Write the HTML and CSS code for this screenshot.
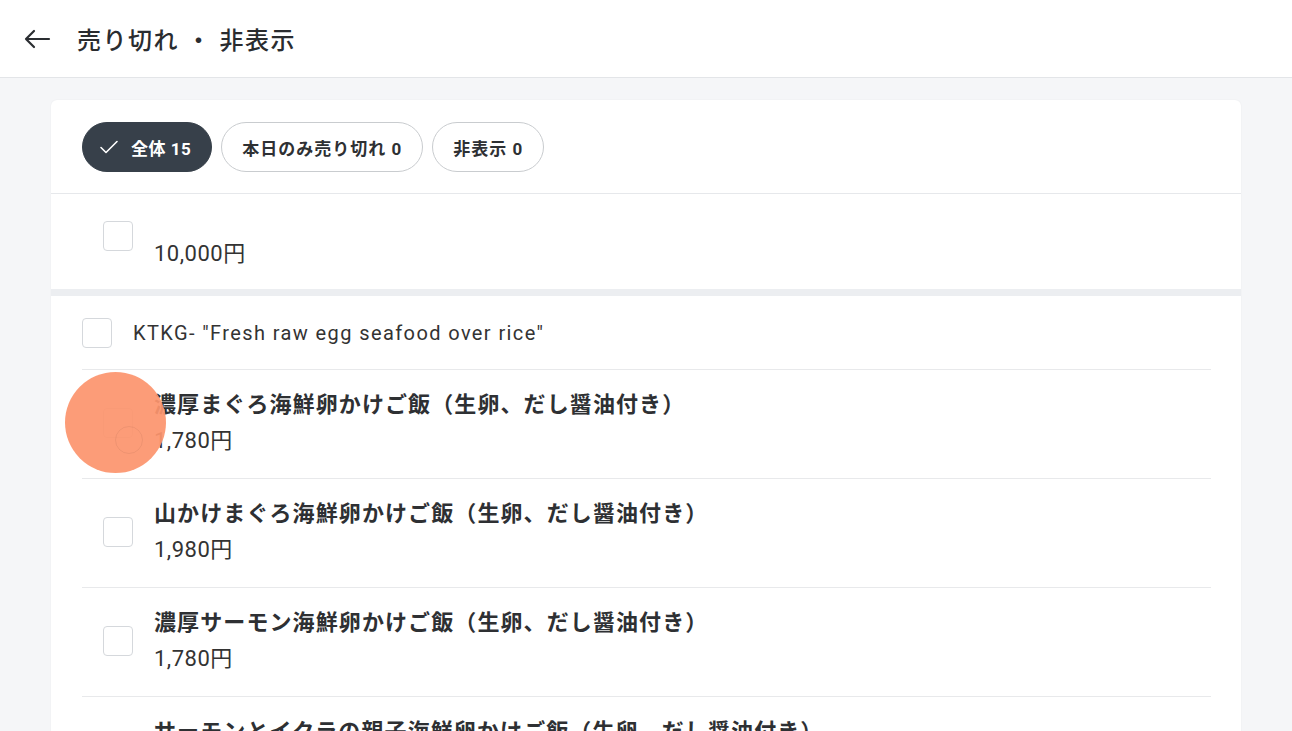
FILE: index.html
```html
<!DOCTYPE html>
<html lang="ja">
<head>
    <meta charset="UTF-8">
    <meta name="viewport" content="width=device-width, initial-scale=1.0">
    <title>売り切れ・非表示</title>
    <link rel="stylesheet" href="styles.css">
</head>
<body>

<header class="topbar">
    <svg class="back" width="28" height="20" viewBox="0 0 28 20">
        <path d="M26 10H3 M11 2L3 10L11 18" fill="none" stroke="#2a2d31" stroke-width="2.2" stroke-linecap="round" stroke-linejoin="round"/>
    </svg>
    <h1 class="title">売り切れ ・ 非表示</h1>
</header>

<main class="page">
    <div class="card">
        <div class="chips">
            <span class="chip chip-active">
                <svg width="20" height="16" viewBox="0 0 20 16">
                    <path d="M2 8.5L7 13.5L18 2.5" fill="none" stroke="#fff" stroke-width="1.6" stroke-linecap="round" stroke-linejoin="round"/>
                </svg>
                全体 15
            </span>
            <span class="chip">本日のみ売り切れ 0</span>
            <span class="chip">非表示 0</span>
        </div>

        <!-- 単品 -->
        <div class="single">
            <span class="checkbox"></span>
            <div class="single-price">10,000円</div>
        </div>

        <div class="band"></div>

        <div class="group">
            <div class="category">
                <span class="checkbox"></span>
                <span class="category-name">KTKG- "Fresh raw egg seafood over rice"</span>
            </div>

            <div class="item">
                <span class="checkbox checkbox-inset"></span>
                <div class="item-info">
                    <div class="item-name">濃厚まぐろ海鮮卵かけご飯（生卵、だし醤油付き）</div>
                    <div class="item-price">1,780円</div>
                </div>
            </div>
            <div class="item">
                <span class="checkbox checkbox-inset"></span>
                <div class="item-info">
                    <div class="item-name">山かけまぐろ海鮮卵かけご飯（生卵、だし醤油付き）</div>
                    <div class="item-price">1,980円</div>
                </div>
            </div>
            <div class="item">
                <span class="checkbox checkbox-inset"></span>
                <div class="item-info">
                    <div class="item-name">濃厚サーモン海鮮卵かけご飯（生卵、だし醤油付き）</div>
                    <div class="item-price">1,780円</div>
                </div>
            </div>
            <div class="item">
                <span class="checkbox checkbox-inset"></span>
                <div class="item-info">
                    <div class="item-name">サーモンとイクラの親子海鮮卵かけご飯（生卵、だし醤油付き）</div>
                    <div class="item-price">2,180円</div>
                </div>
            </div>
        </div>
    </div>
</main>

<!-- タップ位置の表示 -->
<div class="touch"><span class="touch-ring"></span></div>

</body>
</html>
```

FILE: styles.css
```css
html, body {
    margin: 0;
    overflow: hidden;
}
body {
    font-family: Roboto, "Noto Sans CJK JP", sans-serif;
    background-color: #f5f6f8;
    color: #2e3033;
}
.topbar {
    height: 77px;
    background-color: #fff;
    border-bottom: 1px solid #e3e5e8;
    display: flex;
    align-items: center;
    padding-left: 23px;
}
.back {
    margin-right: 26px;
}
.title {
    margin: 0;
    font-size: 24px;
    font-weight: 500;
    color: #2a2c2f;
    letter-spacing: 1.5px;
}
.page {
    padding: 22px 51px 0;
}
.card {
    background-color: #fff;
    border-radius: 6px;
    box-shadow: 0 0 2px rgba(0, 0, 0, 0.06);
}
.chips {
    display: flex;
    gap: 9px;
    padding: 22px 31px 21px;
    border-bottom: 1px solid #e6e8eb;
}
.chip {
    height: 50px;
    box-sizing: border-box;
    display: flex;
    align-items: center;
    padding: 0 20px;
    border: 1px solid #c9cccf;
    border-radius: 25px;
    font-size: 17px;
    font-weight: 700;
    letter-spacing: 1px;
    color: #2e3033;
}
.chip-active {
    background-color: #37404a;
    border-color: #37404a;
    color: #fff;
    padding: 0 20px 0 16px;
    gap: 12px;
    letter-spacing: 0.5px;
}
.checkbox {
    width: 30px;
    height: 30px;
    box-sizing: border-box;
    border: 1px solid #d5d8dc;
    border-radius: 4px;
    flex-shrink: 0;
}
.single {
    display: flex;
    align-items: flex-start;
    padding: 27px 0 17px 52px;
}
.single-price {
    margin: 15px 0 0 21px;
    font-size: 22px;
    line-height: 36px;
    letter-spacing: 0.5px;
    color: #333;
}
.band {
    height: 7px;
    background-color: #eceef1;
}
.group {
    padding: 0 30px 0 31px;
}
.category {
    display: flex;
    align-items: center;
    gap: 21px;
    height: 73px;
    border-bottom: 1px solid #e8e9eb;
}
.category-name {
    font-size: 20px;
    letter-spacing: 1.4px;
    color: #333;
}
.item {
    display: flex;
    align-items: center;
    padding: 17px 0 19px 21px;
    border-bottom: 1px solid #e8e9eb;
}
.checkbox-inset {
    margin-right: 21px;
}
.item-name {
    font-size: 22px;
    font-weight: 700;
    line-height: 36px;
    letter-spacing: 1.1px;
    color: #2e3033;
}
.item-price {
    font-size: 22px;
    line-height: 36px;
    letter-spacing: 0.5px;
    color: #333;
}
.touch {
    position: absolute;
    left: 65px;
    top: 372px;
    width: 101px;
    height: 101px;
    border-radius: 50%;
    background-color: rgba(252, 148, 110, 0.93);
}
.touch-ring {
    position: absolute;
    left: 50px;
    top: 54px;
    width: 26px;
    height: 26px;
    border-radius: 50%;
    border: 1px solid rgba(0, 0, 0, 0.06);
}
```
